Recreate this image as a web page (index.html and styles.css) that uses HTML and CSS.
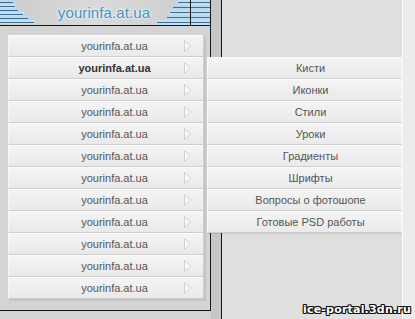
FILE: index.html
```html
<!DOCTYPE html>
<html>
<head>
<meta charset="utf-8">
<link rel="stylesheet" href="styles.css">
</head>
<body>
<div class="frame">
  <div class="left">
    <div class="left-box">
      <div class="header">
        <svg class="deco" width="210" height="25" viewBox="0 0 210 25">
          <rect x="0" y="0" width="14" height="4" fill="#b8d8ec"/>
          <rect x="0" y="4" width="16" height="4" fill="#c3deef"/>
          <rect x="0" y="8" width="19" height="4" fill="#b8d8ec"/>
          <rect x="0" y="12" width="24" height="4" fill="#c3deef"/>
          <rect x="0" y="16" width="29" height="4" fill="#b8d8ec"/>
          <rect x="0" y="20" width="35" height="4" fill="#c3deef"/>
          <g stroke="#3f6e93" stroke-width="1">
            <line x1="0" y1="2.5" x2="13" y2="2.5"/>
            <line x1="0" y1="6.5" x2="15" y2="6.5"/>
            <line x1="0" y1="10.5" x2="18" y2="10.5"/>
            <line x1="0" y1="14.5" x2="23" y2="14.5"/>
            <line x1="0" y1="18.5" x2="28" y2="18.5"/>
            <line x1="0" y1="22.5" x2="34" y2="22.5"/>
          </g>
          <rect x="177" y="0" width="33" height="5" fill="#c3deef"/>
          <rect x="172" y="5" width="38" height="5" fill="#b8d8ec"/>
          <rect x="169" y="10" width="41" height="5" fill="#c3deef"/>
          <rect x="166" y="15" width="44" height="5" fill="#b8d8ec"/>
          <rect x="156" y="20" width="54" height="5" fill="#c3deef"/>
          <g stroke="#3f6e93" stroke-width="1">
            <line x1="178" y1="2.5" x2="210" y2="2.5"/>
            <line x1="173" y1="7.5" x2="210" y2="7.5"/>
            <line x1="170" y1="12.5" x2="210" y2="12.5"/>
            <line x1="167" y1="17.5" x2="210" y2="17.5"/>
            <line x1="157" y1="22.5" x2="210" y2="22.5"/>
          </g>
          <line x1="190.5" y1="0" x2="190.5" y2="25" stroke="#111" stroke-width="1"/>
        </svg>
        <span class="logo">yourinfa.at.ua</span>
      </div>
      <ul class="menu">
        <li class="row"><span class="label">yourinfa.at.ua</span><svg class="arrow" width="7" height="12" viewBox="0 0 7 12"><polygon points="0.5,0.5 6.5,6 0.5,11.5" fill="#f7f9fb" stroke="#c6d2de"/></svg></li>
        <li class="row active"><span class="label">yourinfa.at.ua</span><svg class="arrow" width="7" height="12" viewBox="0 0 7 12"><polygon points="0.5,0.5 6.5,6 0.5,11.5" fill="#f7f9fb" stroke="#c6d2de"/></svg></li>
        <li class="row"><span class="label">yourinfa.at.ua</span><svg class="arrow" width="7" height="12" viewBox="0 0 7 12"><polygon points="0.5,0.5 6.5,6 0.5,11.5" fill="#f7f9fb" stroke="#c6d2de"/></svg></li>
        <li class="row"><span class="label">yourinfa.at.ua</span><svg class="arrow" width="7" height="12" viewBox="0 0 7 12"><polygon points="0.5,0.5 6.5,6 0.5,11.5" fill="#f7f9fb" stroke="#c6d2de"/></svg></li>
        <li class="row"><span class="label">yourinfa.at.ua</span><svg class="arrow" width="7" height="12" viewBox="0 0 7 12"><polygon points="0.5,0.5 6.5,6 0.5,11.5" fill="#f7f9fb" stroke="#c6d2de"/></svg></li>
        <li class="row"><span class="label">yourinfa.at.ua</span><svg class="arrow" width="7" height="12" viewBox="0 0 7 12"><polygon points="0.5,0.5 6.5,6 0.5,11.5" fill="#f7f9fb" stroke="#c6d2de"/></svg></li>
        <li class="row"><span class="label">yourinfa.at.ua</span><svg class="arrow" width="7" height="12" viewBox="0 0 7 12"><polygon points="0.5,0.5 6.5,6 0.5,11.5" fill="#f7f9fb" stroke="#c6d2de"/></svg></li>
        <li class="row"><span class="label">yourinfa.at.ua</span><svg class="arrow" width="7" height="12" viewBox="0 0 7 12"><polygon points="0.5,0.5 6.5,6 0.5,11.5" fill="#f7f9fb" stroke="#c6d2de"/></svg></li>
        <li class="row"><span class="label">yourinfa.at.ua</span><svg class="arrow" width="7" height="12" viewBox="0 0 7 12"><polygon points="0.5,0.5 6.5,6 0.5,11.5" fill="#f7f9fb" stroke="#c6d2de"/></svg></li>
        <li class="row"><span class="label">yourinfa.at.ua</span><svg class="arrow" width="7" height="12" viewBox="0 0 7 12"><polygon points="0.5,0.5 6.5,6 0.5,11.5" fill="#f7f9fb" stroke="#c6d2de"/></svg></li>
        <li class="row"><span class="label">yourinfa.at.ua</span><svg class="arrow" width="7" height="12" viewBox="0 0 7 12"><polygon points="0.5,0.5 6.5,6 0.5,11.5" fill="#f7f9fb" stroke="#c6d2de"/></svg></li>
        <li class="row"><span class="label">yourinfa.at.ua</span><svg class="arrow" width="7" height="12" viewBox="0 0 7 12"><polygon points="0.5,0.5 6.5,6 0.5,11.5" fill="#f7f9fb" stroke="#c6d2de"/></svg></li>
      </ul>
    </div>
  </div>
  <div class="gutter"></div>
  <div class="right"></div>
  <div class="edge"></div>

  <ul class="submenu">
    <li class="subrow">Кисти</li>
    <li class="subrow">Иконки</li>
    <li class="subrow">Стили</li>
    <li class="subrow">Уроки</li>
    <li class="subrow">Градиенты</li>
    <li class="subrow">Шрифты</li>
    <li class="subrow">Вопросы о фотошопе</li>
    <li class="subrow">Готовые PSD работы</li>
  </ul>

  <div class="watermark">ice-portal.3dn.ru</div>
</div>
</body>
</html>
```
FILE: styles.css
```css
* { box-sizing: border-box; }

html, body {
  margin: 0;
  padding: 0;
}

body {
  background: #ececec;
  font-family: "Liberation Sans", Arial, sans-serif;
  font-size: 11px;
  color: #555;
  overflow: hidden;
}

.frame {
  position: relative;
  display: grid;
  grid-template-columns: 211px 10px 182px 1fr;
  width: 415px;
  height: 319px;
}

.left {
  background: #d4d4d4;
}

.left-box {
  height: 311px;
  border-right: 1px solid #161616;
  border-bottom: 1px solid #161616;
}

.header {
  position: relative;
  height: 26px;
  border-bottom: 1px solid #161616;
  background: linear-gradient(to right, #cbcbcb 0%, #dadada 45%, #d2d2d2 75%, #cccccc 100%);
  display: flex;
  align-items: center;
  justify-content: center;
  padding-right: 2px;
}

.deco {
  position: absolute;
  left: 0;
  top: 0;
}

.logo {
  position: relative;
  font-size: 15px;
  color: #3f92c4;
  text-shadow: 0 0 3px #f4f8fb, 0 0 2px #ffffff;
  letter-spacing: 0.1px;
}

.menu {
  list-style: none;
  margin: 9px 0 0 8px;
  padding: 0;
  width: 196px;
  box-shadow: 1px 1px 0 #c2c2c2, 2px 2px 1px rgba(0,0,0,0.06);
}

.row {
  display: grid;
  grid-template-columns: 1fr 7px;
  align-items: center;
  height: 22px;
  padding: 0 12px 0 36px;
  background: linear-gradient(to bottom, #f5f5f5 0%, #efefef 50%, #e9e9e9 100%);
  border-bottom: 1px solid #cdcdcd;
  border-left: 1px solid #f7f7f7;
  border-right: 1px solid #d0d0d0;
  box-shadow: inset 0 1px 0 #fbfbfb;
}

.label {
  text-align: center;
  color: #555;
  white-space: nowrap;
}

.row.active .label {
  font-weight: bold;
  color: #333;
}

.arrow {
  display: block;
}

.gutter {
  background: #c6c6c6;
}

.right {
  background: #dfdfdf;
  border-left: 1px solid #161616;
  border-right: 1px solid #fafafa;
}

.edge {
  background: #ececec;
}

.submenu {
  position: absolute;
  left: 207px;
  top: 57px;
  width: 195px;
  list-style: none;
  margin: 0;
  padding: 0;
  box-shadow: 0 1px 1px rgba(0,0,0,0.08);
}

.subrow {
  height: 22px;
  display: flex;
  align-items: center;
  justify-content: center;
  padding-left: 12px;
  color: #555;
  white-space: nowrap;
  background: linear-gradient(to bottom, #f5f5f5 0%, #efefef 50%, #eaeaea 100%);
  border-bottom: 1px solid #cdcdcd;
  border-left: 1px solid #f8f8f8;
  border-right: 1px solid #f8f8f8;
  box-shadow: inset 0 1px 0 #fbfbfb;
}

.watermark {
  position: absolute;
  right: 4px;
  bottom: 3px;
  font-family: "DejaVu Sans", sans-serif;
  font-weight: bold;
  font-size: 11px;
  color: #ffffff;
  letter-spacing: 0.2px;
  text-shadow: 1px 0 0 #111, -1px 0 0 #111, 0 1px 0 #111, 0 -1px 0 #111, 1px 1px 0 #111, -1px -1px 0 #111, 1px -1px 0 #111, -1px 1px 0 #111;
}
```
